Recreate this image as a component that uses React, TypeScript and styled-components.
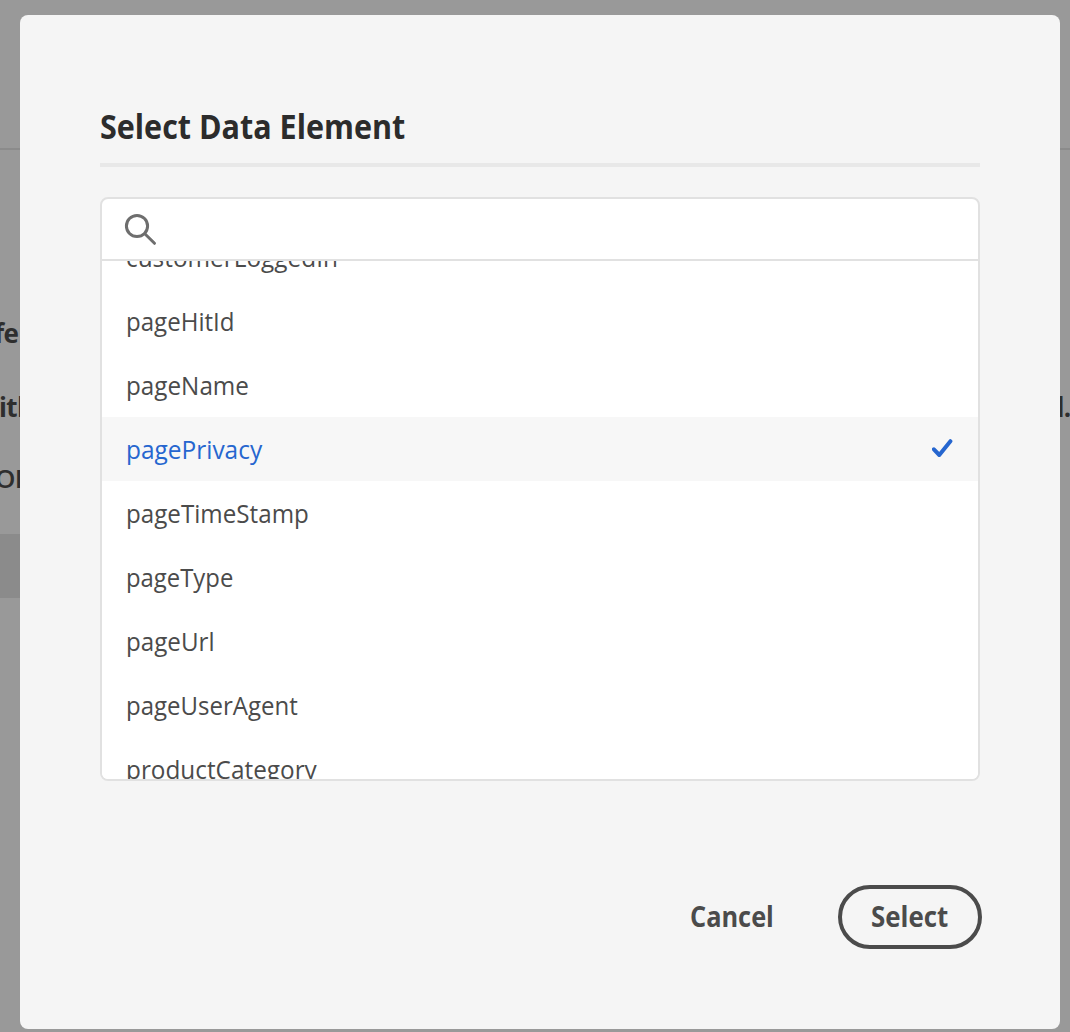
import React from "react";
import styled, { createGlobalStyle } from "styled-components";

const GlobalStyle = createGlobalStyle`
  *, *::before, *::after { box-sizing: border-box; }
  body { margin: 0; background: #999999; font-family: "Open Sans", "Noto Sans", sans-serif; }
  button { font-family: inherit; cursor: pointer; }
`;

const Screen = styled.div`
  display: grid;
  grid-template-columns: 20px 1040px 10px;
  width: 1070px;
  height: 1032px;
  overflow: hidden;
  background: #999999;
`;

const Gutter = styled.div`
  display: flex;
  flex-direction: column;
  overflow: hidden;
`;

const Rule = styled.div`
  flex: none;
  height: 2px;
  margin-top: 148px;
  background: #8b8b8b;
`;

const PageText = styled.div<{ $top: number; $shift: number; $bold?: boolean }>`
  flex: none;
  height: 32px;
  margin-top: ${(p) => p.$top}px;
  text-indent: ${(p) => p.$shift}px;
  font-size: 26px;
  line-height: 32px;
  font-weight: ${(p) => (p.$bold ? 700 : 600)};
  letter-spacing: -0.6px;
  white-space: nowrap;
  color: #2e2e2e;
`;

const PageBand = styled.div`
  flex: none;
  height: 64px;
  margin-top: 40px;
  background: #8b8b8b;
`;

const Dialog = styled.section`
  display: flex;
  flex-direction: column;
  height: 1014px;
  margin-top: 15px;
  padding: 87px 80px 0;
  border-radius: 8px;
  background: #f5f5f5;
`;

const Title = styled.h1`
  flex: none;
  height: 65px;
  margin: 0;
  border-bottom: 4px solid #e8e8e8;
  font-size: 34px;
  font-weight: 700;
  line-height: 48px;
  color: #2c2c2c;
`;

const Fit = styled.span<{ $fit: number }>`
  display: inline-block;
  white-space: nowrap;
  transform: scaleX(${(p) => p.$fit});
  transform-origin: left center;
`;

const Picker = styled.div`
  display: flex;
  flex: none;
  flex-direction: column;
  height: 584px;
  margin-top: 30px;
  overflow: hidden;
  border: 2px solid #e1e1e1;
  border-radius: 8px;
  background: #ffffff;
`;

const SearchBar = styled.label`
  display: flex;
  flex: none;
  height: 62px;
  padding: 14px 22px;
  border-bottom: 2px solid #e1e1e1;
`;

const SearchInput = styled.input`
  flex: 1;
  border: 0;
  outline: 0;
  background: transparent;
  font: inherit;
  font-size: 26px;
`;

const List = styled.ul`
  flex: 1;
  min-height: 0;
  margin: 0;
  padding: 0;
  overflow: hidden;
  list-style: none;
`;

const Row = styled.li<{ $selected?: boolean }>`
  display: flex;
  align-items: center;
  justify-content: space-between;
  height: 64px;
  padding: 0 24px;
  font-size: 26px;
  font-weight: 450;
  line-height: 36px;
  color: ${(p) => (p.$selected ? "#2666cf" : "#4b4b4b")};
  background: ${(p) => (p.$selected ? "#f7f7f7" : "#ffffff")};

  &:first-child { margin-top: -36px; }
`;

const Actions = styled.div`
  display: flex;
  align-items: center;
  justify-content: flex-end;
  gap: 32px;
  margin: 104px -2px 0 0;
`;

const Button = styled.button<{ $outlined?: boolean }>`
  display: flex;
  align-items: center;
  height: 64px;
  width: ${(p) => (p.$outlined ? 144 : 148)}px;
  padding: 0 0 2px ${(p) => (p.$outlined ? 29 : 28)}px;
  border: 4px solid ${(p) => (p.$outlined ? "#4b4b4b" : "transparent")};
  border-radius: 32px;
  background: transparent;
  font-size: 28px;
  font-weight: 680;
  line-height: 36px;
  color: #4b4b4b;
`;

const items = [
  { name: "customerLoggedIn", fit: 0.937 },
  { name: "pageHitId", fit: 0.926 },
  { name: "pageName", fit: 0.933 },
  { name: "pagePrivacy", fit: 0.94 },
  { name: "pageTimeStamp", fit: 0.93 },
  { name: "pageType", fit: 0.918 },
  { name: "pageUrl", fit: 0.93 },
  { name: "pageUserAgent", fit: 0.923 },
  { name: "productCategory", fit: 0.936 },
];

const SearchIcon = () => (
  <svg width="34" height="34" viewBox="0 0 34 34" fill="none" stroke="#6e6e6e" strokeWidth="3">
    <circle cx="13" cy="13" r="10.6" />
    <path d="M20.8 20.8L30.5 30.3" strokeLinecap="round" />
  </svg>
);

const CheckIcon = () => (
  <svg width="22" height="22" viewBox="0 0 22 22" fill="none" stroke="#2666cf" strokeWidth="4" strokeLinecap="round" strokeLinejoin="round">
    <path d="M1.9 11.3L7.3 17L18.4 3.2" />
  </svg>
);

export default function App() {
  const selected = "pagePrivacy";
  return (
    <>
      <GlobalStyle />
      <Screen>
        <Gutter>
          <Rule />
          <PageText $top={167} $shift={-6} $bold>fe</PageText>
          <PageText $top={42} $shift={-1} $bold>ith</PageText>
          <PageText $top={39} $shift={-5}>OI</PageText>
          <PageBand />
        </Gutter>
        <Dialog role="dialog" aria-modal="true">
          <Title><Fit $fit={0.897}>Select Data Element</Fit></Title>
          <Picker>
            <SearchBar>
              <SearchIcon />
              <SearchInput aria-label="Search" />
            </SearchBar>
            <List>
              {items.map(({ name, fit }) => (
                <Row key={name} $selected={name === selected}>
                  <Fit $fit={fit}>{name}</Fit>
                  {name === selected && <CheckIcon />}
                </Row>
              ))}
            </List>
          </Picker>
          <Actions>
            <Button><Fit $fit={0.905}>Cancel</Fit></Button>
            <Button $outlined><Fit $fit={0.925}>Select</Fit></Button>
          </Actions>
        </Dialog>
        <Gutter>
          <Rule />
          <PageText $top={241} $shift={-12} $bold>d.</PageText>
        </Gutter>
      </Screen>
    </>
  );
}
